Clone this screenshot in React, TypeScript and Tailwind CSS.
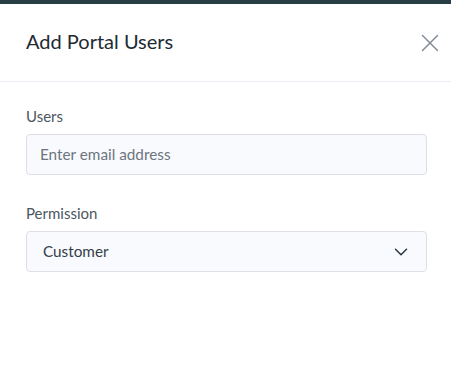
import { X, ChevronDown } from "lucide-react";

export default function App() {
  return (
    <div className="w-[451px] h-[378px] bg-white overflow-hidden font-['Lato','Noto_Sans',sans-serif]">
      {/* top strip */}
      <div className="h-[4px] bg-[#273e44]" />

      {/* header */}
      <div className="h-[78px] flex items-center justify-between pl-[26px] pr-[6px] border-b border-[#e9eff5]">
        <h2 className="text-[20px] text-[#1e2a33] leading-none pb-[4px]">Add Portal Users</h2>
        <button className="w-[30px] h-[30px] flex items-center justify-center text-[#7f8a96]">
          <X className="w-[30px] h-[30px]" strokeWidth={1.1} />
        </button>
      </div>

      {/* form */}
      <div className="px-[26px] pt-[24px] flex flex-col">
        <label className="text-[15px] text-[#4b5661] leading-[20px]">Users</label>
        <input
          placeholder="Enter email address"
          className="mt-[8px] h-[41px] w-[401px] rounded-[4px] border border-[#dde0e7] bg-[#f9fafd] px-[13px] pb-[2px] text-[15.3px] text-[#2f3a45] placeholder:text-[#6c757f] outline-none"
        />

        <label className="mt-[28px] text-[15px] text-[#4b5661] leading-[20px]">Permission</label>
        <div className="mt-[8px] h-[41px] w-[401px] rounded-[4px] border border-[#dde0e7] bg-[#f9fafd] pl-[16px] pr-[14px] flex items-center justify-between">
          <span className="text-[15.3px] text-[#33404b]">Customer</span>
          <ChevronDown className="w-[22px] h-[22px] text-[#2f3a45]" strokeWidth={1.7} />
        </div>
      </div>
    </div>
  );
}
